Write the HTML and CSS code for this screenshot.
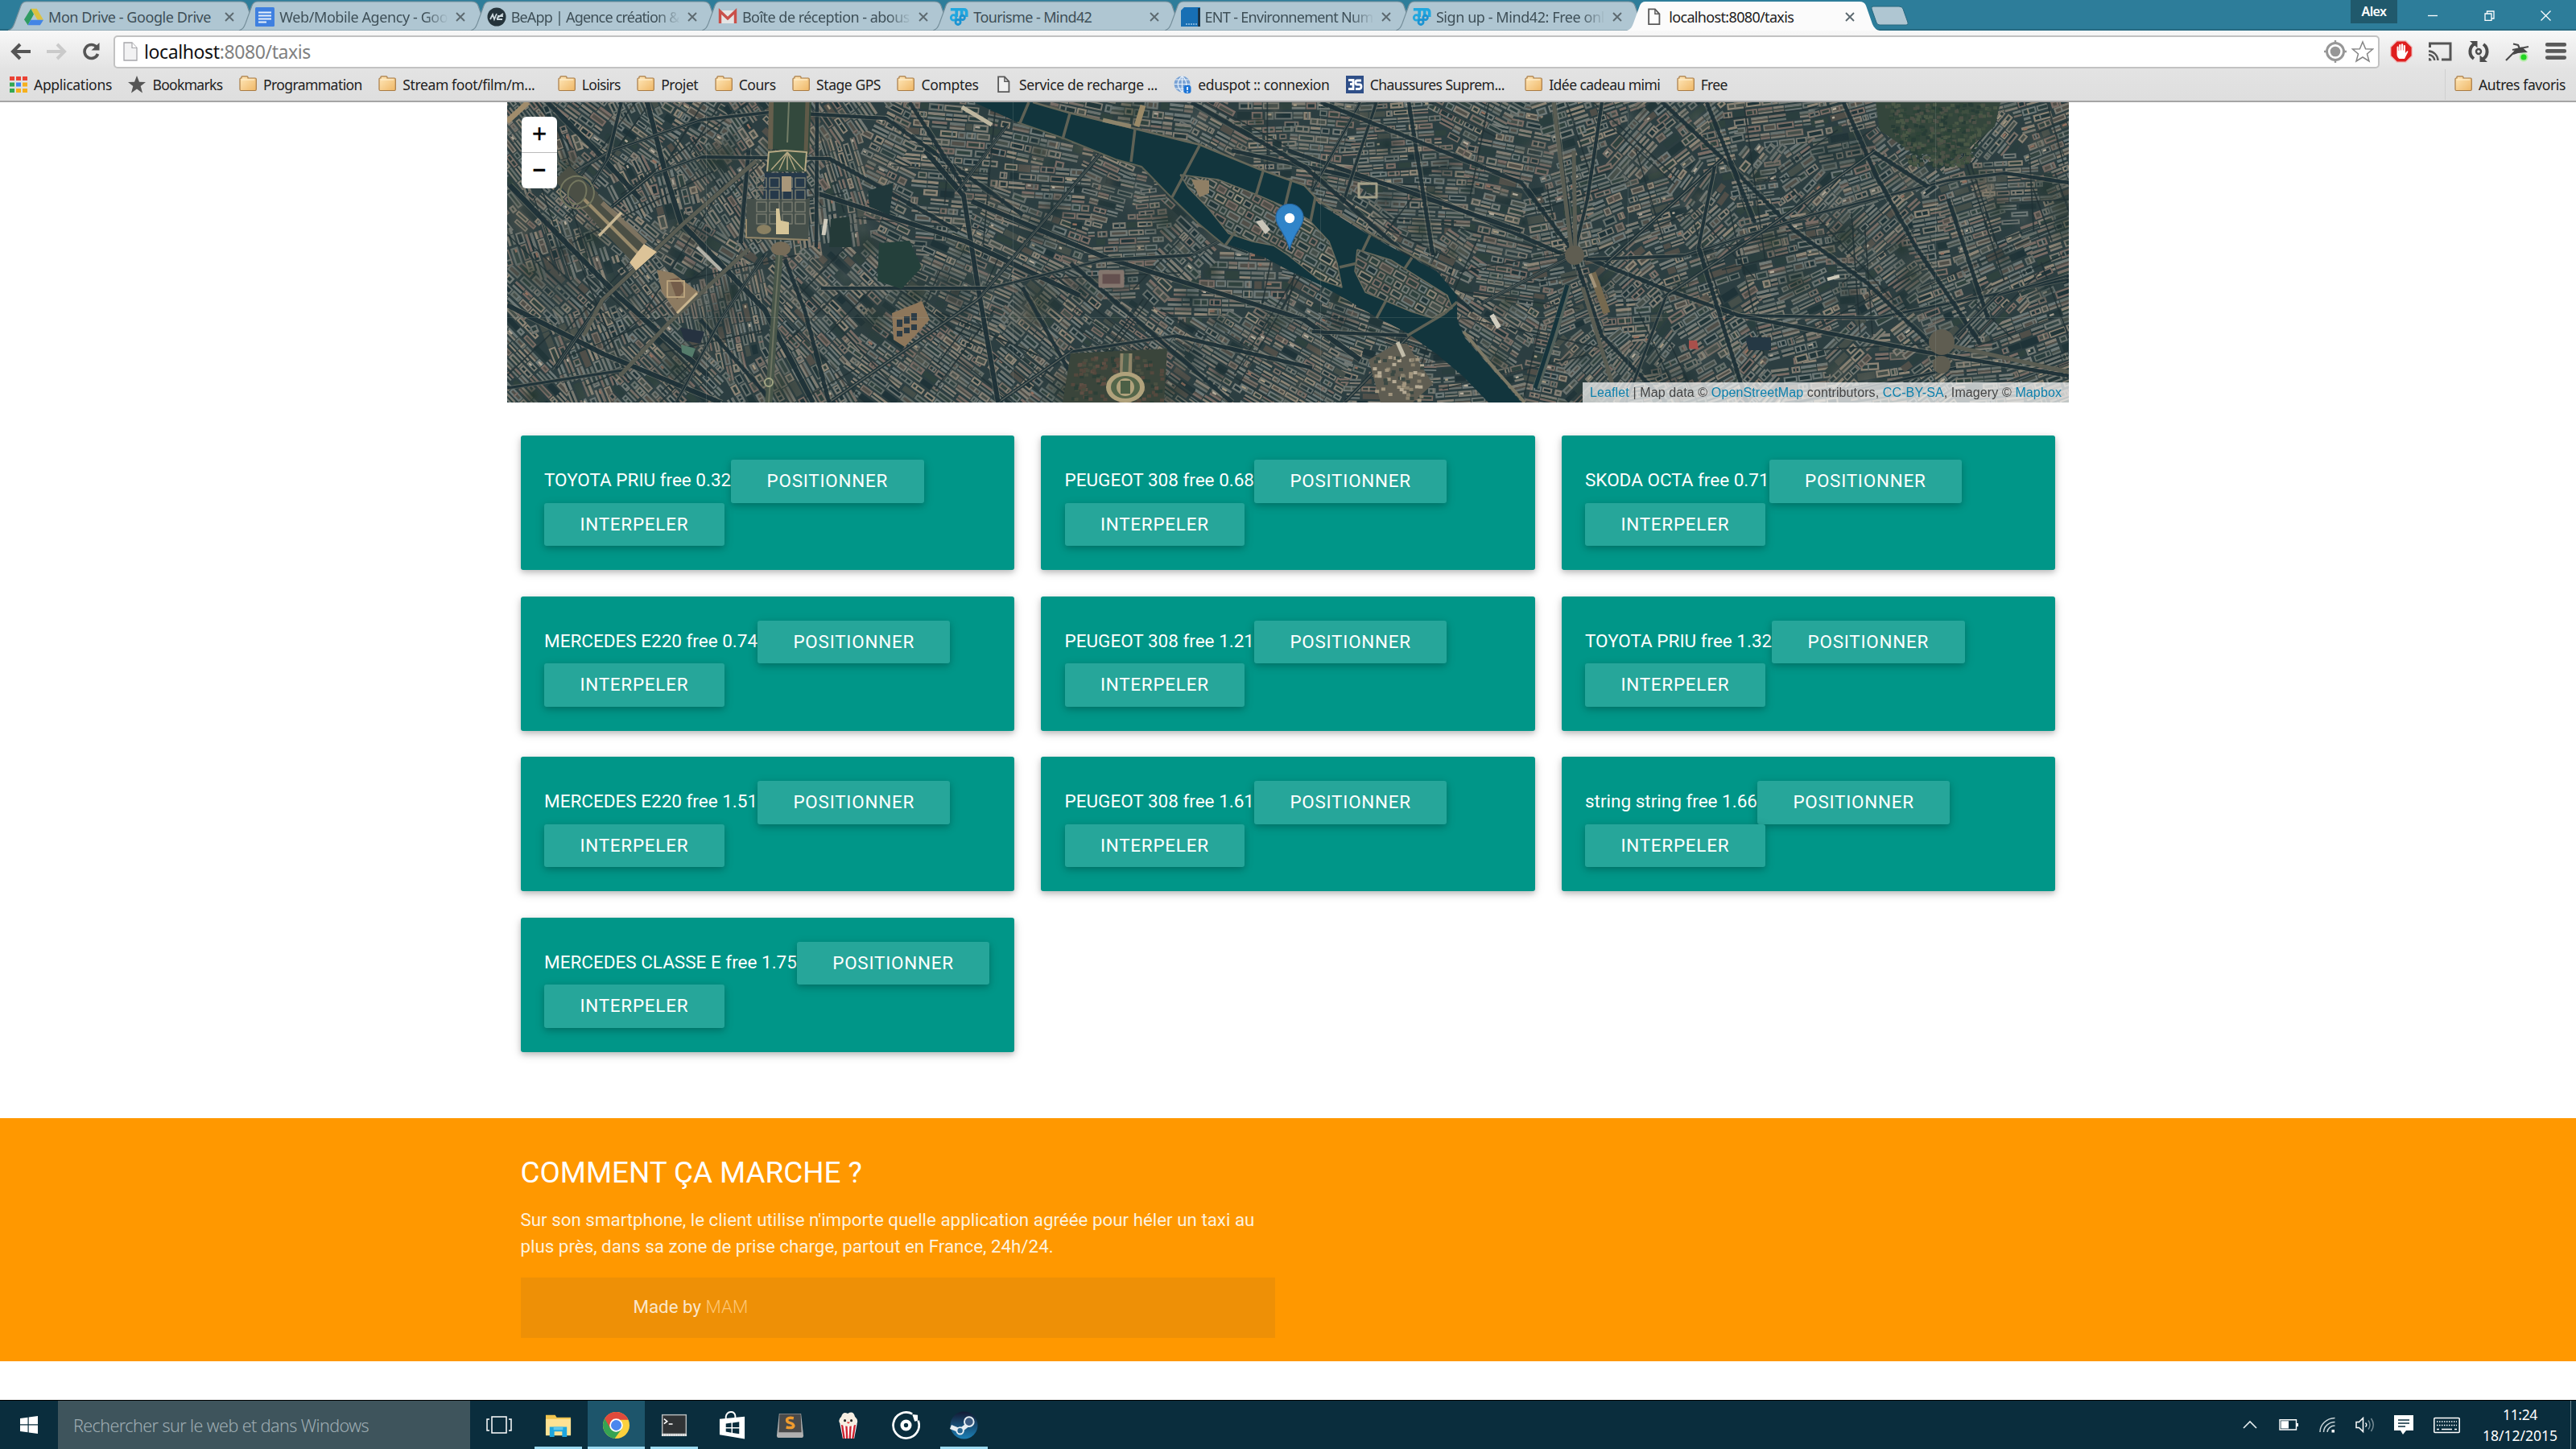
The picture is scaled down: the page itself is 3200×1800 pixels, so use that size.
FILE: index.html
```html
<!DOCTYPE html>
<html lang="fr">
<head>
<meta charset="utf-8">
<title>localhost:8080/taxis</title>
<link rel="stylesheet" href="styles.css">
</head>
<body>
<svg class="sprite" aria-hidden="true">
  <defs>
    <linearGradient id="gFolder" x1="0" y1="0" x2="1" y2="1"><stop offset="0" stop-color="#ffe9bd"/><stop offset="1" stop-color="#efb766"/></linearGradient>
    <linearGradient id="gPin" x1="0" y1="0" x2="0" y2="1"><stop offset="0" stop-color="#3183c4"/><stop offset="1" stop-color="#2f86cf"/></linearGradient>
    <linearGradient id="gSteam" x1="0" y1="0" x2="0" y2="1"><stop offset="0" stop-color="#131a33"/><stop offset="1" stop-color="#1c80b6"/></linearGradient>
  </defs>
  <symbol id="folder" viewBox="0 0 22 22"><path d="M1 4Q1 3 2 3H3V1.500Q3 .8 4 .8H10Q11 .8 11 2V3H20Q21.300 3 21.300 4.500V17Q21.300 18.500 20 18.500H2.500Q1 18.500 1 17Z" fill="url(#gFolder)" stroke="#a87b45" stroke-width="1.200"/><path d="M3 5H19" stroke="#fff3d6" stroke-width="1"/></symbol>
  <symbol id="page" viewBox="0 0 18 24"><path d="M1.500 1.500H10L16 8V22H1.500Z" fill="#fff" fill-opacity=".5" stroke="#5a5a5a" stroke-width="2"/><path d="M10 1.500V8H16" fill="none" stroke="#5a5a5a" stroke-width="1.600"/></symbol>
  <symbol id="mind" viewBox="0 0 26 26"><g fill="none" stroke="#21a7df" stroke-width="4"><path d="M2 3H20Q23.500 3 23.500 7V13"/><path d="M10 3V13M17 3V13"/></g><circle cx="6" cy="14" r="3.500" fill="none" stroke="#21a7df" stroke-width="3"/><circle cx="12" cy="20" r="3.300" fill="none" stroke="#1b93d2" stroke-width="3"/><circle cx="18" cy="14" r="3" fill="none" stroke="#1b93d2" stroke-width="3"/></symbol>
  <symbol id="x" viewBox="0 0 12 12"><path d="M1 1L11 11M11 1L1 11" stroke="#5d6a70" stroke-width="1.900" fill="none"/></symbol>
  <symbol id="tabshape" viewBox="0 0 314 38" preserveAspectRatio="none"><path d="M0 38C5 36 6 34 8 29L16 7Q18 2 23 2H289Q295 2 297 7L305 30Q308 37 314 38Z"/></symbol>
</svg>

<header class="tabbar">
  <div class="tabs">
    <div class="tab"><svg class="shape"><use href="#tabshape"/></svg>
      <svg class="fav" viewBox="0 0 26 24"><path d="M9 1H17L26 16H18Z" fill="#dcc13f"/><path d="M9 1L13 8.500L5 23L0 15.500Z" fill="#2f9b63"/><path d="M9 16H26L21.500 23H5Z" fill="#4385e6"/></svg>
      <span class="title"><span data-w="202">Mon Drive - Google Drive</span></span><svg class="close"><use href="#x"/></svg></div>
    <div class="tab"><svg class="shape"><use href="#tabshape"/></svg>
      <svg class="fav" viewBox="0 0 24 24"><rect width="24" height="24" rx="1.500" fill="#3f80e0"/><path d="M4 6.500H20M4 10.500H20M4 14.500H20M4 18.500H14" stroke="#e6effb" stroke-width="1.900"/></svg>
      <span class="title fade"><span data-w="209">Web/Mobile Agency - Goo</span></span><svg class="close"><use href="#x"/></svg></div>
    <div class="tab"><svg class="shape"><use href="#tabshape"/></svg>
      <svg class="fav" viewBox="0 0 24 24"><circle cx="12" cy="12" r="11.500" fill="#24333b"/><path d="M4 15L7 9L9 15L12 8M12 14L20 8M13 11H20M12 15H19" stroke="#cdd9de" stroke-width="1.800" fill="none"/></svg>
      <span class="title fade"><span data-w="209">BeApp | Agence création &amp;</span></span><svg class="close"><use href="#x"/></svg></div>
    <div class="tab"><svg class="shape"><use href="#tabshape"/></svg>
      <svg class="fav" viewBox="0 0 24 24"><rect x="1" y="4" width="22" height="16" fill="#e4e4e4"/><path d="M2.500 20V5L12 14L21.500 5V20" fill="none" stroke="#c9504a" stroke-width="3.400"/></svg>
      <span class="title fade"><span data-w="208">Boîte de réception - abous</span></span><svg class="close"><use href="#x"/></svg></div>
    <div class="tab"><svg class="shape"><use href="#tabshape"/></svg>
      <svg class="fav"><use href="#mind"/></svg>
      <span class="title"><span data-w="147">Tourisme - Mind42</span></span><svg class="close"><use href="#x"/></svg></div>
    <div class="tab"><svg class="shape"><use href="#tabshape"/></svg>
      <svg class="fav" viewBox="0 0 24 24"><path d="M4 0H24V24H0V4Z" fill="#176fb4"/><path d="M22.500 1V24" stroke="#1e2a33" stroke-width="2.500"/><path d="M6 21H20" stroke="#9cc6e6" stroke-width="1.500" stroke-dasharray="2 1"/></svg>
      <span class="title fade"><span data-w="209">ENT - Environnement Num</span></span><svg class="close"><use href="#x"/></svg></div>
    <div class="tab"><svg class="shape"><use href="#tabshape"/></svg>
      <svg class="fav"><use href="#mind"/></svg>
      <span class="title fade"><span data-w="209">Sign up - Mind42: Free onl</span></span><svg class="close"><use href="#x"/></svg></div>
    <div class="tab active"><svg class="shape"><use href="#tabshape"/></svg>
      <svg class="fav page"><use href="#page"/></svg>
      <span class="title"><span data-w="155">localhost:8080/taxis</span></span><svg class="close"><use href="#x"/></svg></div>
  </div>
  <svg class="newtab" viewBox="0 0 48 26"><path d="M2 4Q1 1 4 1H36Q40 1 41 4L47 21Q48 24 45 24H12Q9 24 8 21Z" fill="#afc6d2" stroke="#27687f"/></svg>
  <div class="window-controls">
    <span class="user"><span data-w="31">Alex</span></span>
    <svg viewBox="0 0 13 13"><path d="M0 6.500H12" stroke="#fff" stroke-width="1.300"/></svg>
    <svg viewBox="0 0 13 13"><path d="M1 4H9V12.300H1ZM3.500 4V1H12V10H9" fill="none" stroke="#fff" stroke-width="1.300"/></svg>
    <svg viewBox="0 0 13 13"><path d="M.5 .5L12.500 12.500M12.500 .5L.5 12.500" stroke="#fff" stroke-width="1.300"/></svg>
  </div>
</header>

<div class="chrome">
  <div class="toolbar">
    <svg class="nav" viewBox="0 0 26 22"><path d="M12 2L3 11L12 20M3.500 11H25" fill="none" stroke="#555" stroke-width="4"/></svg>
    <svg class="nav" viewBox="0 0 26 22"><path d="M14 2L23 11L14 20M22.500 11H1" fill="none" stroke="#cacaca" stroke-width="4"/></svg>
    <svg class="nav" viewBox="0 0 26 22"><path d="M20 5.500A8.500 8.500 0 1 0 21.500 14" fill="none" stroke="#555" stroke-width="3.600"/><path d="M23.500 0V9.500H13.500Z" fill="#555"/></svg>
    <div class="omnibox">
      <svg class="doc" viewBox="0 0 18 24"><path d="M1 1H11L17 7.500V23H1Z" fill="#f2f2f3" stroke="#a7a7ab" stroke-width="1.300"/><path d="M11 1V7.500H17" fill="#fff" stroke="#a7a7ab" stroke-width="1.200"/></svg>
      <span class="url"><span data-w="207">localhost<i>:8080/taxis</i></span></span>
      <svg class="geo" viewBox="0 0 28 30"><circle cx="14" cy="15" r="10.500" fill="none" stroke="#979797" stroke-width="3"/><circle cx="14" cy="15" r="6.300" fill="#979797"/><path d="M14 1V5M14 25V29M0 15H4M24 15H28" stroke="#979797" stroke-width="2.400"/></svg>
      <svg class="star" viewBox="0 0 28 28"><path d="M14 2L17.600 10.700L26.500 11L19.500 17L22 26L14 21L6 26L8.500 17L1.500 11L10.400 10.700Z" fill="#fff" stroke="#858585" stroke-width="1.500"/></svg>
    </div>
    <div class="exts">
      <svg viewBox="0 0 28 28"><path d="M8.500 .7H19.500L27.300 8.500V19.500L19.500 27.300H8.500L.7 19.500V8.500Z" fill="#df1f1f" stroke="#eec4c4" stroke-width="1.400"/><path d="M8.500 17V8.500Q8.500 7.500 9.500 7.500T10.600 8.500V13H11.200V6Q11.200 5 12.300 5T13.400 6V12.500H14V5.200Q14 4.200 15 4.200T16.200 5.200V12.500H16.800V7Q16.800 6 17.800 6T19 7V16L21 13.500Q22.500 12.800 22.300 14.500L18 23H11.500Q8.500 21 8.500 17Z" fill="#fff"/></svg>
      <svg viewBox="0 0 30 24"><path d="M2.500 7V2H28V22H17" fill="none" stroke="#555" stroke-width="3"/><path d="M1 11.500A12 12 0 0 1 12.500 23M1 16A7.500 7.500 0 0 1 8.300 23" fill="none" stroke="#555" stroke-width="2.400"/><path d="M1 20A3.500 3.500 0 0 1 4.500 23.500H1Z" fill="#555"/></svg>
      <svg viewBox="0 0 28 28"><path d="M9 4.500A11 11 0 0 0 8 23M19 23.500A11 11 0 0 0 20 5" fill="none" stroke="#4c4c4c" stroke-width="4"/><path d="M3 1H12.500V9.500ZM25 27H15.500V18.500Z" fill="#4c4c4c"/><circle cx="14" cy="14" r="3" fill="none" stroke="#4c4c4c" stroke-width="2.400"/></svg>
      <svg viewBox="0 0 30 28"><path d="M1 25L13 13M10 4.500L16 6L19 12M9 12L29 8" fill="none" stroke="#4c4c4c" stroke-width="2.200"/><path d="M12 11L21 8.500L28 15L16 16L10 18Z" fill="#474747"/><circle cx="23" cy="21" r="5.500" fill="#9df08c" opacity=".7"/><circle cx="23" cy="21" r="3.600" fill="#22d622"/></svg>
      <svg viewBox="0 0 26 22"><path d="M3 3H23M3 10.500H23M3 18H23" stroke="#5a5a5a" stroke-width="4.400" stroke-linecap="round"/></svg>
    </div>
  </div>
  <nav class="bookmarks">
    <a><svg viewBox="0 0 22 22"><path d="M0 1H6V6H0ZM8 1H14V6H8ZM16 1H22V6H16Z" fill="#ea4335"/><path d="M0 8.500H6V13.500H0Z" fill="#34a853"/><path d="M8 8.500H14V13.500H8Z" fill="#4285f4"/><path d="M16 8.500H22V13.500H16ZM8 16H14V21H8ZM16 16H22V21H16Z" fill="#f6b01d"/><path d="M0 16H6V21H0Z" fill="#34a853"/></svg><span data-w="97">Applications</span></a>
    <a><svg viewBox="0 0 22 22"><path d="M11 0L14 7.800L22 8L15.700 13L18 21.500L11 16.500L4 21.500L6.300 13L0 8L8 7.800Z" fill="#555"/></svg><span data-w="87">Bookmarks</span></a>
    <a><svg><use href="#folder"/></svg><span data-w="123">Programmation</span></a>
    <a class="clipped"><svg><use href="#folder"/></svg><span data-w="164">Stream foot/film/m...</span></a>
    <a><svg><use href="#folder"/></svg><span data-w="48">Loisirs</span></a>
    <a><svg><use href="#folder"/></svg><span data-w="46">Projet</span></a>
    <a><svg><use href="#folder"/></svg><span data-w="46">Cours</span></a>
    <a><svg><use href="#folder"/></svg><span data-w="80">Stage GPS</span></a>
    <a><svg><use href="#folder"/></svg><span data-w="71">Comptes</span></a>
    <a><svg><use href="#page"/></svg><span data-w="172">Service de recharge ...</span></a>
    <a><svg viewBox="0 0 22 22"><circle cx="10.500" cy="10.500" r="10" fill="#7ba3d4"/><path d="M.5 10.500H20.500M2.500 5H18.500M2.500 16H18.500M10.500 .5V20.500M10.500 .5Q0 10 10.500 20.500M10.500 .5Q21 10 10.500 20.500" fill="none" stroke="#e7f0fa" stroke-width="1.200"/><rect x="12.500" y="12" width="9" height="10" rx="3" fill="#1c74d6"/><path d="M17 14V18M17 19.500V21" stroke="#fff" stroke-width="1.700"/></svg><span data-w="163">eduspot :: connexion</span></a>
    <a class="clipped small"><svg viewBox="0 0 22 22"><rect width="22" height="22" fill="#2f4f88"/><path d="M3 5.500H9V10.500H5H9V16.500H3M19 6H14Q12 6 12 8.500T14 11H17Q19 11 19 13.500T17 16.500H12" fill="none" stroke="#fff" stroke-width="2.800"/></svg><span data-w="167">Chaussures Suprem...</span></a>
    <a><svg><use href="#folder"/></svg><span data-w="138">Idée cadeau mimi</span></a>
    <a><svg><use href="#folder"/></svg><span data-w="33">Free</span></a>
    <a class="others"><svg><use href="#folder"/></svg><span data-w="108">Autres favoris</span></a>
  </nav>
</div>

<main>
  <section class="map">
    <canvas id="tiles" width="1940" height="373"></canvas>
    <div class="zoom"><span>+</span><span>−</span></div>
    <svg class="pin" viewBox="0 0 36 58"><path d="M18 57Q16 48 8 34Q1 24 1 17A17 16.500 0 0 1 35 17Q35 24 28 34Q20 48 18 57Z" fill="url(#gPin)" stroke="#2768a4" stroke-width="1.200"/><circle cx="18" cy="18" r="6.200" fill="#fff"/></svg>
    <div class="attribution"><span data-w="586"><a>Leaflet</a> | Map data © <a>OpenStreetMap</a> contributors, <a>CC-BY-SA</a>, Imagery © <a>Mapbox</a></span></div>
  </section>

  <section class="cards">
    <article>TOYOTA PRIU free 0.32<button>Positionner</button> <button>Interpeler</button></article>
    <article>PEUGEOT 308 free 0.68<button>Positionner</button> <button>Interpeler</button></article>
    <article>SKODA OCTA free 0.71<button>Positionner</button> <button>Interpeler</button></article>
    <article>MERCEDES E220 free 0.74<button>Positionner</button> <button>Interpeler</button></article>
    <article>PEUGEOT 308 free 1.21<button>Positionner</button> <button>Interpeler</button></article>
    <article>TOYOTA PRIU free 1.32<button>Positionner</button> <button>Interpeler</button></article>
    <article>MERCEDES E220 free 1.51<button>Positionner</button> <button>Interpeler</button></article>
    <article>PEUGEOT 308 free 1.61<button>Positionner</button> <button>Interpeler</button></article>
    <article>string string free 1.66<button>Positionner</button> <button>Interpeler</button></article>
    <article>MERCEDES CLASSE E free 1.75<button>Positionner</button> <button>Interpeler</button></article>
  </section>
</main>

<footer class="about">
  <div class="inner">
    <h5>COMMENT ÇA MARCHE ?</h5>
    <p>Sur son smartphone, le client utilise n'importe quelle application agréée pour héler un taxi au plus près, dans sa zone de prise charge, partout en France, 24h/24.</p>
    <div class="credit">Made by <a>MAM</a></div>
  </div>
</footer>

<div class="taskbar">
  <div class="start"><svg viewBox="0 0 22 22"><path d="M0 3L9.500 1.700V10.300H0ZM10.700 1.500L22 0V10.300H10.700ZM0 11.600H9.500V20.300L0 19ZM10.700 11.600H22V22L10.700 20.500Z" fill="#fff"/></svg></div>
  <div class="search"><span data-w="367">Rechercher sur le web et dans Windows</span></div>
  <div class="apps">
    <div><svg class="view" viewBox="0 0 32 22"><path d="M7 1H25V21H7ZM4 4H1V18H4M28 4H31V18H28" fill="none" stroke="#fff" stroke-width="1.500"/></svg></div>
    <div class="open"><svg viewBox="0 0 36 36"><path d="M2 5H14L16 8H34V30H2Z" fill="#f0c44f"/><path d="M2 10H34V31H2Z" fill="#ffe294"/><path d="M7 20H29V33H23V26H13V33H7Z" fill="#1fa6de"/><path d="M12 20H24V24H12Z" fill="#5fc7ee"/></svg></div>
    <div class="open current"><svg viewBox="0 0 36 36"><circle cx="18" cy="18" r="17" fill="#fbd13d"/><path d="M18 18L3.300 9.500A17 17 0 0 0 16 34.900L25.500 22Z" fill="#35a353"/><path d="M3.300 9.500A17 17 0 0 1 33.500 11H18L10.500 22Z" fill="#df4a3c"/><circle cx="18" cy="18" r="8.500" fill="#fff"/><circle cx="18" cy="18" r="6.700" fill="#4a87ee"/></svg></div>
    <div class="open"><svg viewBox="0 0 36 36"><rect x="2" y="4" width="32" height="28" fill="#b8bcbd"/><rect x="3.500" y="5.500" width="29" height="23" fill="#303335"/><path d="M5 10L9 13L5 16M11 16.500H16" stroke="#fff" stroke-width="1.600" fill="none"/><path d="M2 30.500H34" stroke="#e9e9e9" stroke-width="3" stroke-dasharray="2 1"/></svg></div>
    <div><svg viewBox="0 0 36 36"><path d="M2 10L34 7V35.500L2 30Z" fill="#fff"/><path d="M10 10V7Q11 1.500 16 1T22 6V9" stroke="#fff" stroke-width="2" fill="none"/><path d="M10 16L17 15V20.500H10ZM18.500 14.800L27 13.700V20.500H18.500ZM10 22H17V27.500L10 26.300ZM18.500 22H27V29L18.500 27.700Z" fill="#0a2d3d"/></svg></div>
    <div><svg viewBox="0 0 36 36"><path d="M4 3H32L35 31Q35 34 32 34H4Q1 34 1 31Z" fill="#b0b0b0"/><path d="M4.500 3.500H31.500L32.500 27H3.500Z" fill="#4a4a4a"/><path d="M22.500 9Q14 7.500 14 11.500Q14 14 18 15T22.500 18.500Q22 22.500 13 20.500" fill="none" stroke="#ef9b2e" stroke-width="3.600"/></svg></div>
    <div><svg class="popcorn" viewBox="0 0 36 36" preserveAspectRatio="none"><path d="M6 16H30L26 35H10Z" fill="#fff"/><path d="M9 17L12 35M15 17L16 35M21 17L20 35M27 17L24 35" stroke="#cf2430" stroke-width="2.700"/><path d="M7 17Q2 12 8 7Q10 0 17 3Q25 -1 27 7Q33 12 29 17Q18 22 7 17Z" fill="#f6eee2"/><circle cx="13" cy="12" r="1.700" fill="#222"/><circle cx="22" cy="12" r="1.700" fill="#222"/><path d="M15.500 14H20Q18 18 15.500 14Z" fill="#d33"/></svg></div>
    <div><svg viewBox="0 0 36 36"><path d="M26 3.500A16.500 16.500 0 1 0 33.500 12" fill="none" stroke="#fff" stroke-width="2.800"/><circle cx="18" cy="18" r="5" fill="none" stroke="#fff" stroke-width="4.500"/><path d="M26 4L33 5V12L29 13Z" fill="#fff"/></svg></div>
    <div class="open"><svg viewBox="0 0 36 36"><circle cx="18" cy="18" r="17.500" fill="url(#gSteam)"/><path d="M1 20L13 25L22 18" fill="none" stroke="#e6edf2" stroke-width="5.500"/><circle cx="24.500" cy="13.500" r="6" fill="#3c5b80" stroke="#e6edf2" stroke-width="2"/><circle cx="13" cy="25" r="4.300" fill="#27648f" stroke="#e6edf2" stroke-width="2"/></svg></div>
  </div>
  <div class="tray">
    <svg viewBox="0 0 18 22"><path d="M1 15L9 7L17 15" fill="none" stroke="#e8eef0" stroke-width="1.600"/></svg>
    <svg viewBox="0 0 24 22"><path d="M1 4.700H21.500V17H1Z" fill="none" stroke="#fff" stroke-width="1.400"/><path d="M2.500 6.300H12V15.500H2.500ZM22 9H24V13H22Z" fill="#fff"/></svg>
    <svg viewBox="0 0 20 22"><path d="M1 20A19 17.500 0 0 1 19.500 2.500M5.500 20A14 13 0 0 1 19.500 7.500M10 20A9.500 8.500 0 0 1 19.500 12" fill="none" stroke="#c9d4d8" stroke-width="1.500"/><rect x="15.500" y="17" width="3.500" height="3.500" fill="#fff"/></svg>
    <svg viewBox="0 0 24 22"><path d="M1 7.500H4.500L9.500 2.500V19.500L4.500 14.500H1Z" fill="none" stroke="#fff" stroke-width="1.500"/><path d="M12.500 8.500Q15 11 12.500 13.500" stroke="#fff" stroke-width="1.400" fill="none"/><path d="M16 5.500Q20 11 16 16.500M19.500 3Q25 11 19.500 19" stroke="#7c9099" stroke-width="1.400" fill="none"/></svg>
    <svg viewBox="0 0 24 24"><path d="M0 0H24V19H15L11 24L8 19H0Z" fill="#fff"/><path d="M5 6H19M5 10H19M5 14H14" stroke="#0a2d3d" stroke-width="1.300"/></svg>
    <svg viewBox="0 0 33 22"><rect x=".8" y="2.500" width="31.400" height="18" rx="1" fill="none" stroke="#fff" stroke-width="1.500"/><path d="M4 7H29M4 11.500H29" stroke="#fff" stroke-width="1.400" stroke-dasharray="1.500 1.500"/><path d="M4 16.500H7M10 16.500H23M26 16.500H29" stroke="#fff" stroke-width="1.400"/></svg>
    <div class="clock"><span data-w="43">11:24</span><span data-w="93">18/12/2015</span></div>
  </div>
</div>
<script src="app.js"></script>
</body>
</html>
```
FILE: styles.css
```css
* { box-sizing: border-box; }
html, body { margin: 0; width: 3200px; height: 1800px; overflow: hidden; }
body {
  display: flex;
  flex-direction: column;
  background: #fff;
  font-family: "Noto Sans", "Open Sans", sans-serif;
}
svg { display: block; flex: none; }
.sprite { position: absolute; width: 0; height: 0; }
[data-w] { display: inline-block; white-space: pre; flex: none; }

/* window frame */
.tabbar {
  display: flex;
  height: 38px;
  background: #2d7d9a;
  box-shadow: inset 0 -2px 0 #276a82;
}
.tabs { display: flex; padding-left: 10px; }
.tab {
  position: relative;
  display: flex;
  align-items: center;
  width: 314px;
  height: 38px;
  margin-right: -26.7px;
  padding: 3px 0 0 20px;
  font-size: 18px;
  color: #3e4f57;
}
.tab .shape { position: absolute; left: 0; top: 0; width: 314px; height: 38px; fill: #afc6d2; stroke: #768f9b; stroke-width: 1.2; }
.tab.active { z-index: 2; padding-left: 22px; color: #222; }
.tab.active .shape { fill: #fbfbfb; stroke: none; }
.fav { position: relative; width: 24px; height: 24px; margin-right: 6px; }
.fav.page { width: 24px; height: 22px; }
.title { position: relative; width: 210px; overflow: hidden; line-height: 30px; }
.fade { -webkit-mask-image: linear-gradient(90deg, #000 86%, transparent); mask-image: linear-gradient(90deg, #000 86%, transparent); }
.close { position: relative; width: 12px; height: 12px; margin-left: 9px; }
.newtab { width: 48px; height: 26px; margin: 7px 0 0 14px; }
.window-controls { display: flex; align-items: center; margin-left: auto; padding-right: 31px; }
.window-controls svg { width: 13px; height: 13px; margin-left: 57px; }
.window-controls .user + svg { margin-left: 38px; }
.user {
  display: flex;
  align-self: flex-start;
  justify-content: center;
  width: 58px;
  height: 29px;
  line-height: 29px;
  background: #20596c;
  color: #fff;
  font-size: 16px;
  font-weight: 600;
}

/* browser toolbar */
.chrome { height: 89px; background: linear-gradient(#f8f8f8, #e3e3e3 55%, #dedede); border-bottom: 2px solid #a5a5a5; }
.toolbar { display: flex; align-items: center; height: 46px; padding: 6px 11px 0 13px; }
.nav { width: 26px; height: 22px; margin-right: 18px; }
.nav:nth-child(3) { margin: 0 15px 0 -1px; }
.omnibox {
  display: flex;
  align-items: center;
  width: 2817px;
  height: 41px;
  padding: 0 4px 0 10px;
  border: 2px solid #c2c2c2;
  border-radius: 5px;
  background: #fff;
  color: #111;
  font-size: 23px;
}
.doc { width: 18px; height: 24px; margin-right: 8px; }
.url { margin-right: auto; line-height: 36px; }
.url i { font-style: normal; color: #808080; }
.geo { width: 28px; height: 30px; margin-right: 6px; }
.star { width: 28px; height: 28px; margin-right: 1px; }
.exts { display: flex; align-items: center; gap: 19px; margin-left: 13px; }
.exts svg { width: 28px; height: 28px; }
.exts svg:nth-child(2), .exts svg:nth-child(4) { width: 30px; }
.bookmarks { display: flex; align-items: center; gap: 20.45px; height: 41px; padding: 0 13px 0 12px; font-size: 17.5px; color: #222; line-height: 38px; }
.bookmarks a { display: flex; align-items: center; }
.bookmarks svg { width: 22px; height: 22px; margin-right: 8px; }
.bookmarks .clipped { margin-right: 8px; }
.bookmarks .small { margin-right: 5px; }
.bookmarks .others { margin-left: auto; padding-left: 11px; border-left: 1px solid #d0d0d0; }

/* page */
main { width: 1940px; margin: 0 auto; }
.map { position: relative; height: 373px; overflow: hidden; background: #3d4a49; }
.map canvas { display: block; }
.zoom { position: absolute; left: 18px; top: 18px; display: flex; flex-direction: column; width: 44px; border-radius: 6px; background: #fff; }
.zoom span { height: 44px; text-align: center; font: bold 29px/42px "Liberation Sans", sans-serif; color: #000; }
.zoom span:first-child { height: 45px; border-bottom: 1px solid #bbb; font-weight: 400; font-size: 31px; line-height: 43px; -webkit-text-stroke: .4px #000; }
.pin { position: absolute; left: 954px; top: 126px; width: 36px; height: 58px; }
.attribution { position: absolute; right: 0; bottom: 0; width: 604px; height: 25px; padding-left: 9px; background: rgba(255, 255, 255, .7); color: #444; font: 16px/25px "Liberation Sans", sans-serif; }
.attribution a { color: #0d80ad; }

.cards {
  display: grid;
  grid-template-columns: repeat(3, 613.5px);
  column-gap: 33px;
  row-gap: 32.6px;
  padding: 41px 16.5px 0;
}
article {
  height: 167px;
  padding: 30px 29.5px;
  border-radius: 3px;
  background: #009688;
  box-shadow: 0 3px 7px rgba(0, 0, 0, .2), 0 3px 14px rgba(0, 0, 0, .12);
  color: #fff;
  font: 22.5px/33px Roboto, sans-serif;
}
button {
  height: 53.5px;
  padding: 0 44.4px;
  border: 0;
  border-radius: 3px;
  background: #26a69a;
  box-shadow: 0 3px 7px rgba(0, 0, 0, .16), 0 3px 14px rgba(0, 0, 0, .12);
  color: #fff;
  font: 22.4px/53.5px Roboto, sans-serif;
  letter-spacing: .78px;
  text-transform: uppercase;
  vertical-align: middle;
}

.about { height: 302px; margin-top: 82px; background: #ff9800; font-family: Roboto, sans-serif; }
.inner { width: 1907px; margin: 0 auto; padding-top: 44px; }
h5 { margin: 0; color: #fff; font-size: 36.8px; font-weight: 400; line-height: 47px; }
p { width: 937px; margin: 19px 0 0; color: #fdf2de; font-size: 22.35px; line-height: 33px; }
.credit { width: 937px; height: 75px; margin-top: 22px; padding-left: 140px; background: #ee9006; color: rgba(255, 255, 255, .8); font-size: 22.3px; line-height: 73px; }
.credit a { color: #fdc674; font-weight: 300; }

/* desktop taskbar */
.taskbar { display: flex; height: 61px; margin-top: auto; border-top: 1px solid #000; background: #0a2d3d; }
.start { display: flex; align-items: center; width: 72px; padding-left: 25px; }
.start svg { width: 22px; height: 22px; }
.search { width: 512px; padding-left: 19px; background: #3e545c; color: #9fadb3; font-size: 21.5px; font-weight: 300; line-height: 61px; }
.apps { display: flex; }
.apps div { display: flex; align-items: center; justify-content: center; width: 71px; margin-right: 1px; }
.apps div:first-child { margin-right: 3px; }
.apps svg { width: 35px; height: 35px; }
.apps .view { width: 32px; height: 22px; }
.apps .popcorn { width: 32px; }
.apps .open { background: linear-gradient(#9bd9f0, #9bd9f0) bottom / 59px 3px no-repeat; }
.apps .current { background: linear-gradient(#9bd9f0, #9bd9f0) bottom / 71px 3px no-repeat #1d556b; }
.tray { display: flex; align-items: center; margin-left: auto; margin-right: 6px; padding-right: 16px; border-right: 1px solid #6c8791; }
.tray svg { width: 24px; height: 22px; margin-right: 24px; }
.tray svg:nth-child(1) { width: 18px; margin-right: 27px; }
.tray svg:nth-child(2) { margin-right: 26px; }
.tray svg:nth-child(3) { width: 20px; margin-right: 25px; }
.tray svg:nth-child(5) { height: 24px; margin-right: 25px; }
.tray svg:nth-child(6) { width: 33px; margin-right: 28px; }
.clock { display: flex; flex-direction: column; align-items: center; color: #fff; font-size: 17.5px; line-height: 26px; }
```
FILE: app.js
```js
// Labels keep a fixed measure whatever sans-serif face is available.
document.querySelectorAll('[data-w]').forEach(el => {
  const target = Number(el.dataset.w);
  const n = el.textContent.length;
  const natural = el.getBoundingClientRect().width;
  el.style.letterSpacing = ((target - natural) / n).toFixed(3) + 'px';
});

// Satellite imagery of central Paris, painted block by block.
(function () {
  const c = document.getElementById('tiles');
  const g = c.getContext('2d');
  const W = c.width, H = c.height;
  let s = 7;
  const rnd = () => (s = (s * 16807) % 2147483647) / 2147483647;
  const pick = a => a[Math.floor(rnd() * a.length)];
  g.fillStyle = '#2c3e41';
  g.fillRect(0, 0, W, H);

  const seeds = [];
  for (let i = 0; i < 150; i++) {
    const x = rnd() * W;
    const base = x < 420 ? 1.0 : x < 1000 ? 0.35 : x < 1300 ? 0.2 : -0.5;
    seeds.push({ x, y: rnd() * H, a: base + (rnd() - 0.5) * 0.9, step: 9 + rnd() * 3 });
  }
  const nearest = (x, y) => {
    let b = null, bd = 1e9;
    for (const q of seeds) {
      const d = (q.x - x) ** 2 + (q.y - y) ** 2;
      if (d < bd) { bd = d; b = q; }
    }
    return b;
  };
  const roofs = ['#737a76', '#7b7b72', '#69716e', '#827e74', '#646e6a', '#756e66', '#6d7877', '#8d8576', '#796c65'];
  const yards = ['#223639', '#2a3e3e', '#2f423e', '#1f3338', '#454f4a', '#504f49'];
  const warm = ['#a59a83', '#b5ad9c', '#94705f', '#a9a294'];
  for (const q of seeds) {
    g.save();
    g.translate(q.x, q.y);
    g.rotate(q.a);
    const ca = Math.cos(q.a), sa = Math.sin(q.a), R = 200;
    for (let v = -R; v < R; v += q.step) {
      let u = -R + rnd() * 12;
      while (u < R) {
        const w = 8 + rnd() * 15, h = q.step - 2 - rnd() * 1.500;
        const cu = u + w / 2, cv = v + h / 2;
        const X = q.x + cu * ca - cv * sa, Y = q.y + cu * sa + cv * ca;
        if (X > -20 && X < W + 20 && Y > -20 && Y < H + 20 && nearest(X, Y) === q) {
          const k = rnd();
          if (k < 0.09) {
            g.fillStyle = pick(yards); g.fillRect(u, v, w, h);
          } else if (k < 0.62) {
            g.fillStyle = pick(yards); g.fillRect(u, v, w, h);
            g.strokeStyle = pick(roofs); g.lineWidth = 1.700 + rnd() * .8; g.strokeRect(u + 1, v + 1, w - 2, h - 2);
            if (rnd() < .5) { g.fillStyle = pick(roofs); g.fillRect(u + w * (.3 + rnd() * .4), v, 2, h); }
          } else {
            g.fillStyle = pick(roofs); g.fillRect(u, v, w, h * .42);
            g.fillStyle = pick(yards); g.fillRect(u, v + h * .42, w, h * .25);
            g.fillStyle = pick(roofs); g.fillRect(u, v + h * .67, w, h * .33);
          }
          if (rnd() < 0.07) { g.fillStyle = pick(warm); g.fillRect(u + 2, v + 2, 3 + rnd() * 4, 2.500); }
        }
        u += w + 1 + (rnd() < .2 ? 2.500 : 0);
      }
    }
    g.restore();
  }
  for (let i = 0; i < 240; i++) {
    const r = 10 + rnd() * 26;
    const x = rnd() * W, y = rnd() * H;
    const f = g.createRadialGradient(x, y, 0, x, y, r);
    f.addColorStop(0, pick(['rgba(22,44,46,.5)', 'rgba(34,52,42,.55)', 'rgba(130,116,96,.25)', 'rgba(120,124,118,.22)']));
    f.addColorStop(1, 'rgba(60,70,68,0)');
    g.fillStyle = f;
    g.fillRect(x - r, y - r, 2 * r, 2 * r);
  }

  const trace = pts => { g.beginPath(); pts.forEach((p, i) => i ? g.lineTo(p[0], p[1]) : g.moveTo(p[0], p[1])); };
  const line = (pts, w, col) => { g.strokeStyle = col; g.lineWidth = w; g.lineJoin = 'round'; trace(pts); g.stroke(); };
  const poly = (pts, col) => { g.fillStyle = col; trace(pts); g.closePath(); g.fill(); };

  for (let i = 0; i < 150; i++) {
    const x = rnd() * W, y = rnd() * H;
    const a = nearest(x, y).a + (rnd() < 0.5 ? Math.PI / 2 : 0), l = 30 + rnd() * 70;
    line([[x - Math.cos(a) * l, y - Math.sin(a) * l], [x + Math.cos(a) * l, y + Math.sin(a) * l]], 1.800, 'rgba(32,49,53,.8)');
  }

  const roads = [
    [[519, 60], [567, 116], [585, 230], [610, 373]], [[577, 123], [743, 193], [990, 270], [1060, 320]],
    [[385, 113], [570, 173], [711, 240]], [[0, 252], [120, 313], [265, 373]], [[309, 73], [220, 150], [118, 246], [60, 330]],
    [[3, 103], [137, 240], [250, 340]], [[50, 0], [110, 60], [165, 120]], [[174, 0], [197, 90], [216, 150]], [[216, 150], [320, 258], [380, 373]],
    [[300, 60], [290, 175]], [[385, 0], [384, 180]], [[60, 100], [130, 60], [240, 22], [330, 12], [470, 20], [640, 140]], [[130, 130], [180, 90], [240, 68], [400, 70], [560, 160]],
    [[390, 231], [600, 231], [740, 196], [850, 190], [890, 170]], [[500, 0], [570, 110]], [[620, 30], [560, 110]], [[142, 0], [125, 70], [100, 110]],
    [[400, 373], [585, 245], [740, 60]], [[240, 270], [330, 373]], [[640, 230], [720, 373]], [[610, 373], [700, 310], [830, 290], [1000, 330]],
    [[210, 373], [265, 270], [320, 190]], [[300, 182], [200, 275], [140, 340]], [[0, 355], [150, 332]], [[345, 195], [370, 260], [400, 373]],
    [[700, 200], [900, 373]], [[900, 60], [1130, 110], [1310, 188]], [[970, 60], [1260, 160]], [[1360, 0], [1342, 120], [1325, 190]], [[1300, 0], [1325, 190]],
    [[1325, 190], [1210, 250]], [[1345, 195], [1440, 233], [1530, 265], [1700, 268], [1940, 220]], [[1325, 190], [1360, 290], [1440, 373]],
    [[1435, 0], [1510, 70], [1600, 160], [1690, 225], [1770, 302]], [[1340, 195], [1460, 191], [1620, 140], [1790, 97], [1860, 88], [1940, 100]],
    [[1510, 70], [1365, 200]], [[1490, 0], [1550, 150]], [[1660, 0], [1700, 90], [1750, 180], [1830, 300]],
    [[1695, 60], [1765, 105]], [[1790, 120], [1840, 270]], [[1530, 265], [1760, 310], [1940, 340]], [[1800, 290], [1850, 240], [1940, 215]],
    [[1540, 373], [1480, 180], [1500, 80]], [[1390, 373], [1440, 240], [1560, 160], [1700, 60]], [[1000, 285], [1120, 290], [1040, 373]],
    [[1000, 110], [1060, 0]], [[1080, 0], [1040, 120]], [[1120, 0], [1150, 190]], [[850, 0], [990, 80], [1200, 260]],
    [[1600, 373], [1800, 330]], [[1010, 0], [1260, 100], [1320, 180]]
  ];
  roads.forEach((r, i) => {
    line(r, i < 10 ? 6 : 4.500, 'rgba(31,50,56,.95)');
    line(r.map(p => [p[0] + 3, p[1] - 2.500]), 1, 'rgba(140,140,126,.55)');
    line(r.map(p => [p[0] - 3, p[1] + 2.500]), 1, 'rgba(140,140,126,.4)');
  });
  [[[309, 73], [220, 150], [118, 246], [95, 290]], [[1325, 60], [1327, 190]], [[1300, 0], [1323, 190]], [[1336, 230], [1380, 373]], [[300, 182], [200, 275], [140, 340]], [[1782, 300], [1940, 335]]]
    .forEach(r => line(r, 5, '#5a5d53'));
  line([[1318, 227], [1300, 290], [1278, 355]], 9, '#53615b');
  line([[1317, 227], [1298, 290], [1277, 355]], 5, '#16343c');

  // gardens and esplanades
  poly([[330, 0], [378, 0], [375, 64], [330, 58]], '#33493d');
  line([[350, 0], [348, 50]], 2, '#727c66'); line([[328, 0], [327, 58]], 6, '#665f4d'); line([[373, 0], [371, 64]], 5, '#5f5a48');
  poly([[326, 60], [372, 60], [370, 86], [323, 86]], '#3b5141');
  for (let i = 0; i < 5; i++) line([[348, 62], [328 + i * 10, 84]], 1.500, '#b7a984');
  line([[323, 86], [325, 62], [345, 60], [372, 62], [370, 86]], 2, '#b7a984');
  poly([[320, 88], [372, 88], [372, 120], [318, 120]], '#26394a');
  poly([[298, 120], [376, 120], [374, 172], [296, 170]], '#454f4a');
  for (let r = 0; r < 4; r++) for (let k = 0; k < 4; k++) { g.strokeStyle = '#76796e'; g.lineWidth = 1.500; g.strokeRect(310 + k * 16, 94 + r * 15, 12, 12); }
  poly([[341, 92], [353, 92], [353, 111], [341, 111]], '#a9977a');
  line([[297, 145], [297, 168], [374, 171]], 2, '#94876a');
  g.fillStyle = '#8a8062'; g.beginPath(); g.ellipse(319, 158, 9, 6, 0, 0, 7); g.fill();
  poly([[334, 132], [338, 132], [340, 147], [350, 149], [350, 164], [334, 164]], '#d6c598');
  g.fillStyle = '#776c58'; g.beginPath(); g.ellipse(340, 182, 12, 9, 0, 0, 7); g.fill();
  line([[338, 190], [332, 270], [325, 373]], 9, '#48564a'); line([[338, 190], [332, 270], [325, 373]], 2, '#6d7361');
  g.strokeStyle = '#a2a583'; g.lineWidth = 2; g.beginPath(); g.ellipse(325, 348, 5, 5, 0, 0, 7); g.stroke();
  line([[396, 145], [393, 165]], 5, '#d0cbbd');
  poly([[402, 145], [425, 142], [428, 180], [400, 180]], '#243a38');
  poly([[448, 110], [480, 100], [475, 140], [450, 130]], '#20383b'); poly([[462, 175], [500, 172], [515, 205], [490, 232], [460, 222]], '#24403b');
  line([[68, 88], [100, 120], [165, 190]], 26, '#4b4f45'); line([[95, 120], [170, 195]], 4, '#9b8c6c'); line([[118, 125], [172, 175]], 6, '#7d7360');
  g.strokeStyle = '#74775f'; g.lineWidth = 2; g.beginPath(); g.ellipse(87, 112, 11, 15, .3, 0, 7); g.stroke(); g.beginPath(); g.ellipse(87, 112, 21, 20, .3, 0, 7); g.stroke();
  line([[114, 166], [142, 137]], 3.500, '#c9b894'); poly([[170, 176], [186, 186], [160, 209], [152, 199]], '#dcc398');
  poly([[186, 208], [206, 212], [238, 236], [211, 262], [192, 235]], '#8d7b61'); poly([[202, 220], [213, 218], [221, 233], [211, 245]], '#745d4a');
  g.strokeStyle = '#b9a27c'; g.lineWidth = 2; g.strokeRect(199, 222, 21, 20); line([[211, 262], [236, 237]], 3, '#c9b58f');
  line([[236, 180], [266, 209]], 4, '#b3b1a7');
  poly([[216, 301], [234, 306], [230, 317], [217, 311]], '#557c6b'); poly([[215, 280], [245, 285], [240, 300], [220, 296]], '#263240');
  line([[0, 24], [26, 0]], 7, '#a08c6c'); line([[565, 6], [602, 28]], 5, '#bdb69f');
  poly([[478, 262], [515, 247], [525, 270], [494, 304], [480, 295]], '#8e775b');
  for (let i = 0; i < 3; i++) { g.fillStyle = '#2d3c46'; g.fillRect(484 + i * 9, 270 - i * 4, 7, 9); g.fillRect(484 + i * 9, 284 - i * 4, 7, 7); }
  poly([[736, 210], [765, 210], [765, 228], [736, 229]], '#64504f'); g.strokeStyle = '#83756d'; g.strokeRect(737, 211, 27, 17);
  poly([[700, 312], [820, 306], [816, 373], [690, 373]], '#3a453b');
  for (let i = 0; i < 150; i++) { g.fillStyle = pick(['#54493e', '#2c3f37', '#4a4f41', '#5f4f44']); g.fillRect(700 + rnd() * 112, 314 + rnd() * 58, 5, 4); }
  line([[769, 312], [768, 373]], 15, '#8f8568'); line([[769, 312], [768, 335]], 7, '#50604c');
  g.fillStyle = '#b0a27c'; g.beginPath(); g.ellipse(768, 354, 24, 19, 0, 0, 7); g.fill();
  g.fillStyle = '#54664a'; g.beginPath(); g.ellipse(768, 354, 18, 14, 0, 0, 7); g.fill();
  g.fillStyle = '#b0a27c'; g.beginPath(); g.ellipse(768, 354, 11, 11, 0, 0, 7); g.fill(); g.fillStyle = '#4c6046'; g.fillRect(762, 346, 12, 16);
  poly([[1700, 0], [1855, 0], [1848, 30], [1800, 70], [1745, 62], [1705, 35]], '#34463c');
  for (let i = 0; i < 420; i++) { const y = rnd() * 78; g.fillStyle = pick(['#273c36', '#3f4f40', '#2e4438', '#4a5846', '#4d5147']); g.fillRect(1704 + y * .5 + rnd() * (146 - y), y, 5, 4); }

  // the Seine and its islands
  poly([[580, 0], [653, 0], [698, 13], [768, 30], [861, 53], [934, 83], [990, 103], [1008, 126], [1072, 166], [1155, 210], [1180, 240], [1180, 270], [1190, 293], [1225, 333], [1260, 373], [1219, 373], [1187, 340], [1155, 313], [1117, 286], [1078, 266], [1034, 240], [1008, 226], [973, 210], [941, 193], [890, 175], [858, 150], [820, 113], [788, 80], [756, 71], [692, 45], [634, 25]], '#12353d');
  line([[653, 0], [698, 13], [768, 30], [861, 53], [934, 83], [990, 103], [1008, 122], [1072, 163], [1155, 206]], 2.500, '#67685a');
  line([[634, 25], [692, 45], [756, 71], [788, 80], [820, 113], [858, 150], [890, 177]], 2, '#5d6255');
  line([[1188, 285], [1230, 335], [1264, 373]], 4, '#7d7966');
  const island = (pts, cx, cy) => {
    poly(pts, '#33443f');
    g.save(); trace(pts); g.closePath(); g.clip();
    g.translate(cx, cy); g.rotate(.52);
    for (let v = -90; v < 90; v += 11) {
      for (let u = -140; u < 140;) {
        const w = 8 + rnd() * 10;
        g.fillStyle = pick(yards); g.fillRect(u, v, w, 9);
        g.strokeStyle = pick(roofs.concat('#96907f')); g.lineWidth = 2; g.strokeRect(u + 1, v + 1, w - 2, 7);
        u += w + 2;
      }
    }
    g.restore(); line(pts.concat([pts[0]]), 1.500, '#6a6b5d');
  };
  island([[836, 90], [883, 96], [934, 116], [973, 133], [996, 146], [1021, 173], [1031, 200], [1037, 230], [1008, 220], [970, 190], [952, 178], [926, 173], [896, 163], [872, 133], [846, 106]], 930, 155);
  island([[1056, 183], [1098, 196], [1136, 220], [1168, 240], [1174, 256], [1149, 268], [1123, 260], [1066, 236], [1053, 210]], 1113, 228);
  poly([[850, 96], [872, 97], [872, 113], [860, 118]], '#8f7f65'); poly([[930, 148], [938, 146], [948, 158], [942, 164]], '#c9c5b8');
  [[[648, 0], [637, 26]], [[699, 14], [690, 46]], [[780, 33], [775, 74]], [[860, 54], [826, 118]], [[939, 86], [930, 116]], [[974, 97], [966, 130]],
    [[905, 160], [892, 178]], [[1004, 118], [998, 148]], [[1072, 165], [1062, 186]], [[1124, 193], [1114, 208]], [[1034, 205], [1056, 200]],
    [[1092, 246], [1080, 268]], [[1180, 248], [1165, 262]], [[1165, 262], [1118, 290]]].forEach(b => line(b, 3.500, '#5f6256'));

  // landmarks on the right bank
  const hub = (x, y, r) => { g.fillStyle = '#5f5d51'; g.beginPath(); g.ellipse(x, y, r, r, 0, 0, 7); g.fill(); };
  hub(1326, 190, 12); hub(1782, 298, 16); hub(1782, 326, 11);
  g.strokeStyle = '#a39f88'; g.lineWidth = 3; g.strokeRect(1058, 101, 22, 17);
  poly([[1070, 320], [1104, 300], [1118, 300], [1150, 350], [1125, 373], [1085, 373]], '#5f5d52');
  for (let i = 0; i < 60; i++) { g.fillStyle = pick(['#8c836f', '#a2967f', '#3b4843', '#b5aa94']); g.fillRect(1075 + rnd() * 60, 315 + rnd() * 55, 5, 4); }
  line([[1106, 298], [1114, 316]], 5, '#c3bdaa'); line([[1223, 264], [1232, 280]], 6, '#d2cec0');
  line([[1348, 212], [1366, 262]], 9, '#76694f'); line([[1345, 213], [1352, 230]], 4, '#a3947a');
  poly([[1468, 296], [1478, 296], [1480, 307], [1468, 306]], '#a9504b');
  line([[1640, 220], [1655, 216]], 4, '#ccc8b8'); poly([[1538, 292], [1570, 292], [1570, 308], [1542, 308]], '#253844');
  line([[790, 4], [782, 30]], 7, '#9b8a68'); line([[740, 22], [775, 30]], 5, '#8d846b');

  g.fillStyle = 'rgba(150,165,160,.2)';
  g.fillRect(0, 267, W, 1);
  [247, 628, 1010, 1392, 1774].forEach(x => g.fillRect(x, 0, 1, H));
})();
```
